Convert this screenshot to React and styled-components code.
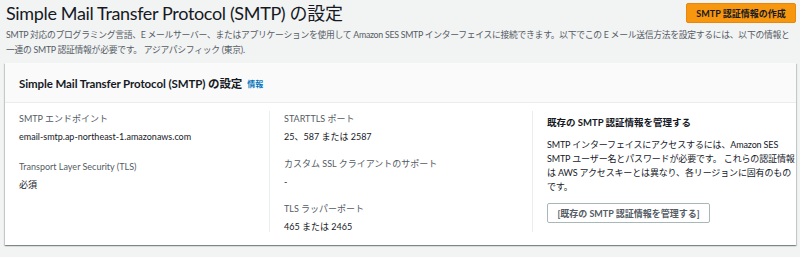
import React from 'react';
import styled, { createGlobalStyle } from 'styled-components';

const GlobalStyle = createGlobalStyle`
  html, body {
    margin: 0;
    padding: 0;
    background: #f2f3f3;
  }
  body {
    font-family: Lato, 'Noto Sans CJK JP', sans-serif;
    color: #16191f;
  }
`;

const Page = styled.div`
  width: 800px;
  height: 257px;
  box-sizing: border-box;
  padding: 2px 4px 0 6px;
  overflow: hidden;
`;

const TopBar = styled.div`
  display: flex;
  justify-content: space-between;
  align-items: flex-start;
`;

const Title = styled.h1`
  margin: 0;
  font-size: 18px;
  line-height: 23px;
  font-weight: 400;
  letter-spacing: -0.35px;
  color: #16191f;
`;

const PrimaryButton = styled.button`
  margin-top: 1px;
  width: 110px;
  height: 20px;
  padding: 0;
  border: 1px solid #e8870b;
  border-radius: 2px;
  background: #f7960f;
  color: #16191f;
  font-family: inherit;
  font-size: 9px;
  font-weight: 700;
`;

const Description = styled.p`
  margin: 2px 0 0;
  font-size: 8.8px;
  line-height: 15px;
  letter-spacing: -0.28px;
  color: #545b64;
`;

const Card = styled.section`
  margin: 6px 0 0 -1px;
  width: 791px;
  background: #fff;
  box-shadow: 0 1px 1px 0 rgba(0, 28, 36, 0.3), 1px 1px 1px 0 rgba(0, 28, 36, 0.15),
    -1px 1px 1px 0 rgba(0, 28, 36, 0.15);
`;

const CardHeader = styled.header`
  height: 39px;
  display: flex;
  align-items: center;
  gap: 5px;
  padding: 0 14px;
  background: #fafafa;
  border-bottom: 1px solid #eaeded;
`;

const CardTitle = styled.h2`
  margin: 0;
  font-size: 11.5px;
  letter-spacing: -0.1px;
  font-weight: 700;
`;

const InfoLink = styled.a`
  font-size: 8px;
  font-weight: 700;
  color: #0073bb;
  text-decoration: none;
  margin-top: 2px;
`;

const CardBody = styled.div`
  display: grid;
  grid-template-columns: 264px 263px 1fr;
  padding: 8px 0 13px;
`;

const Column = styled.div`
  padding: 0 8px 0 14px;
  height: 121px;
  border-left: ${(p) => (p.divided ? '1px solid #eaeded' : 'none')};
`;

const Field = styled.div`
  margin-bottom: ${(p) => p.gap || 11}px;

  &:last-child {
    margin-bottom: 0;
  }
`;

const Label = styled.div`
  font-size: 9px;
  line-height: 16px;
  color: #545b64;
`;

const Value = styled.div`
  margin-top: 2px;
  font-size: 9px;
  line-height: 16px;
  color: #16191f;
`;

const SideHeading = styled.h3`
  margin: 4px 0 0;
  font-size: 9.5px;
  line-height: 16px;
  font-weight: 700;
`;

const SideText = styled.p`
  margin: 7px 0 0;
  width: 248px;
  font-size: 9px;
  line-height: 14px;
  letter-spacing: -0.15px;
  color: #16191f;
`;

const SecondaryButton = styled.button`
  margin-top: 9px;
  height: 20px;
  width: 163px;
  padding: 0;
  background: #fff;
  border: 1px solid #aab7b8;
  border-radius: 2px;
  color: #545b64;
  font-family: inherit;
  font-size: 9px;
  font-weight: 700;
`;

export default function App() {
  return (
    <>
      <GlobalStyle />
      <Page>
        <TopBar>
          <Title>Simple Mail Transfer Protocol (SMTP) の設定</Title>
          <PrimaryButton>SMTP 認証情報の作成</PrimaryButton>
        </TopBar>
        <Description>
          SMTP 対応のプログラミング言語、E メールサーバー、またはアプリケーションを使用して Amazon SES SMTP インターフェイスに接続できます。以下でこの E メール送信方法を設定するには、以下の情報と一連の SMTP 認証情報が必要です。 アジアパシフィック (東京).
        </Description>
        <Card>
          <CardHeader>
            <CardTitle>Simple Mail Transfer Protocol (SMTP) の設定</CardTitle>
            <InfoLink href="#">情報</InfoLink>
          </CardHeader>
          <CardBody>
            <Column>
              <Field gap={14}>
                <Label>SMTP エンドポイント</Label>
                <Value>email-smtp.ap-northeast-1.amazonaws.com</Value>
              </Field>
              <Field>
                <Label>Transport Layer Security (TLS)</Label>
                <Value>必須</Value>
              </Field>
            </Column>
            <Column divided>
              <Field>
                <Label>STARTTLS ポート</Label>
                <Value>25、587 または 2587</Value>
              </Field>
              <Field>
                <Label>カスタム SSL クライアントのサポート</Label>
                <Value>-</Value>
              </Field>
              <Field>
                <Label>TLS ラッパーポート</Label>
                <Value>465 または 2465</Value>
              </Field>
            </Column>
            <Column divided>
              <SideHeading>既存の SMTP 認証情報を管理する</SideHeading>
              <SideText>
                SMTP インターフェイスにアクセスするには、Amazon SES SMTP ユーザー名とパスワードが必要です。 これらの認証情報は AWS アクセスキーとは異なり、各リージョンに固有のものです。
              </SideText>
              <SecondaryButton>[既存の SMTP 認証情報を管理する]</SecondaryButton>
            </Column>
          </CardBody>
        </Card>
      </Page>
    </>
  );
}
